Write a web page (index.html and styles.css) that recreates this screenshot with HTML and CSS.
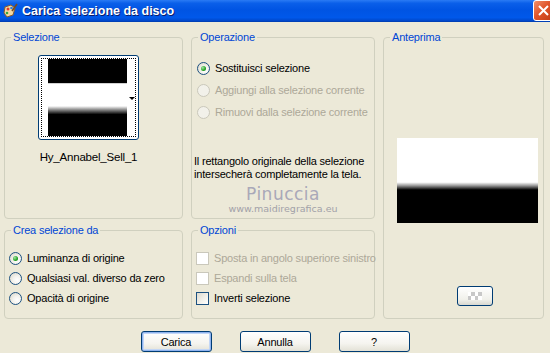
FILE: index.html
```html
<!DOCTYPE html>
<html lang="it">
<head>
    <meta charset="UTF-8">
    <title>Carica selezione da disco</title>
    <link rel="stylesheet" href="styles.css">
</head>
<body>
    <div class="window">
        <!-- Title bar -->
        <div class="titlebar">
            <svg class="app-icon" width="16" height="16" viewBox="0 0 16 16">
                <path d="M3 4 L9 2 L13 5 L11 12 L5 14 L2 10 Z" fill="#f3d9a4" stroke="#8a5a2b" stroke-width="1"/>
                <circle cx="6" cy="6" r="1.5" fill="#e53b2c"/>
                <circle cx="9.5" cy="5" r="1.3" fill="#2d7de0"/>
                <circle cx="5" cy="10" r="1.3" fill="#3aa53a"/>
                <path d="M10 8 L15 1" stroke="#7a4a1a" stroke-width="1.6"/>
            </svg>
            <span class="title">Carica selezione da disco</span>
            <div class="close-btn">
                <svg width="21" height="21" viewBox="0 0 21 21">
                    <path d="M6 6 L15 15 M15 6 L6 15" stroke="#fff" stroke-width="2"/>
                </svg>
            </div>
        </div>

        <div class="content">
            <div class="groups">
                <fieldset class="group sel-group">
                    <legend>Selezione</legend>
                    <div class="thumb-wrap">
                        <div class="thumb-btn">
                            <div class="thumb-focus">
                                <div class="thumb-img"></div>
                            </div>
                            <span class="thumb-arrow"></span>
                        </div>
                        <div class="thumb-name">Hy_Annabel_Sell_1</div>
                    </div>
                </fieldset>

                <fieldset class="group op-group">
                    <legend>Operazione</legend>
                    <div class="option-list op-list">
                        <label class="option"><span class="radio checked"></span>Sostituisci selezione</label>
                        <label class="option disabled"><span class="radio"></span>Aggiungi alla selezione corrente</label>
                        <label class="option disabled"><span class="radio"></span>Rimuovi dalla selezione corrente</label>
                    </div>
                    <p class="op-note">Il rettangolo originale della selezione intersecherà completamente la tela.</p>
                    <div class="watermark">
                        <div class="wm-name">Pinuccia</div>
                        <div class="wm-site">www.maidiregrafica.eu</div>
                    </div>
                </fieldset>

                <fieldset class="group preview-group">
                    <legend>Anteprima</legend>
                    <div class="preview-img"></div>
                    <div class="preview-btn">
                        <span class="dots"></span>
                    </div>
                </fieldset>

                <fieldset class="group crea-group">
                    <legend>Crea selezione da</legend>
                    <div class="option-list">
                        <label class="option"><span class="radio checked"></span>Luminanza di origine</label>
                        <label class="option"><span class="radio"></span>Qualsiasi val. diverso da zero</label>
                        <label class="option"><span class="radio"></span>Opacità di origine</label>
                    </div>
                </fieldset>

                <fieldset class="group opt-group">
                    <legend>Opzioni</legend>
                    <div class="option-list">
                        <label class="option disabled"><span class="check"></span>Sposta in angolo superiore sinistro</label>
                        <label class="option disabled"><span class="check"></span>Espandi sulla tela</label>
                        <label class="option"><span class="check"></span>Inverti selezione</label>
                    </div>
                </fieldset>
            </div>

            <div class="buttons">
                <button class="btn default">Carica</button>
                <button class="btn">Annulla</button>
                <button class="btn">?</button>
            </div>
        </div>
    </div>
</body>
</html>
```

FILE: styles.css
```css
* {
    margin: 0;
    padding: 0;
    box-sizing: border-box;
}

body {
    width: 550px;
    height: 353px;
    overflow: hidden;
    background: #ece9d8;
    font-family: 'Liberation Sans', Arial, sans-serif;
    font-size: 11px;
    letter-spacing: -0.2px;
    color: #000;
}

.window {
    width: 550px;
    height: 353px;
    display: flex;
    flex-direction: column;
}

/* Title bar */
.titlebar {
    position: relative;
    height: 22px;
    display: flex;
    align-items: center;
    gap: 4px;
    padding-left: 2px;
    background: linear-gradient(
        to bottom,
        #2a7bf4 0%,
        #0a5fe9 15%,
        #0054e3 45%,
        #0058ea 80%,
        #0046c8 95%,
        #003aa8 100%
    );
}

.app-icon {
    flex: none;
}

.title {
    color: #fff;
    font-weight: bold;
    font-size: 12.5px;
    letter-spacing: 0;
    text-shadow: 1px 1px 0 #0a1c6b;
}

.close-btn {
    position: absolute;
    left: 533px;
    top: 0;
    width: 21px;
    height: 21px;
    border: 1px solid #fff;
    border-radius: 3px;
    background: linear-gradient(135deg, #f0906a 0%, #e0552b 45%, #c23b14 100%);
}

.close-btn svg {
    position: absolute;
    left: -1px;
    top: -1px;
}

/* Content */
.content {
    flex: 1;
    display: flex;
    flex-direction: column;
    padding: 9px 0 0 4px;
}

.groups {
    display: grid;
    grid-template-columns: 179px 184px 161px;
    grid-template-rows: 188px 95px;
    column-gap: 8px;
    row-gap: 5px;
}

.group {
    border: 1px solid #d0d0bf;
    border-radius: 4px;
    padding: 0 6px;
    min-width: 0;
}

.group legend {
    color: #0046d5;
    padding: 0 2px;
    margin-left: 0;
    line-height: 13px;
}

.sel-group {
    grid-column: 1;
    grid-row: 1;
}

.op-group {
    grid-column: 2;
    grid-row: 1;
}

.preview-group {
    grid-column: 3;
    grid-row: 1 / 3;
}

.crea-group {
    grid-column: 1;
    grid-row: 2;
}

.opt-group {
    grid-column: 2;
    grid-row: 2;
}

/* Selezione thumbnail */
.thumb-wrap {
    display: flex;
    flex-direction: column;
    align-items: center;
    margin-top: 11px;
    margin-right: 10px;
}

.thumb-btn {
    position: relative;
    width: 101px;
    height: 85px;
    border: 1px solid #003c74;
    border-radius: 3px;
    background: #fff;
    padding: 2px;
}

.thumb-focus {
    width: 95px;
    height: 79px;
    border: 1px dotted #000;
    padding: 0 0 0 6px;
}

.thumb-img {
    width: 79px;
    height: 77px;
    background: linear-gradient(
        to bottom,
        #000 0,
        #000 31%,
        #fff 32%,
        #fff 61%,
        #888 66%,
        #000 72%,
        #000 100%
    );
}

.thumb-arrow {
    position: absolute;
    right: 3px;
    top: 41px;
    border-left: 3px solid transparent;
    border-right: 3px solid transparent;
    border-top: 3px solid #000;
}

.thumb-name {
    margin-top: 11px;
    font-size: 11.5px;
}

/* Options */
.option-list {
    display: flex;
    flex-direction: column;
    gap: 6px;
    margin-top: 14px;
    margin-left: -2px;
}

.op-list {
    margin-top: 17px;
    gap: 8px;
    margin-left: -1px;
}

.option {
    display: flex;
    align-items: center;
    gap: 5px;
    height: 14px;
    white-space: nowrap;
}

.option.disabled {
    color: #aca899;
}

.radio {
    flex: none;
    width: 13px;
    height: 13px;
    border: 1px solid #1c5180;
    border-radius: 50%;
    background: radial-gradient(circle at 65% 65%, #fff 0%, #f4f3ee 40%, #d6d2c2 100%);
    display: flex;
    align-items: center;
    justify-content: center;
}

.radio.checked::after {
    content: '';
    width: 5px;
    height: 5px;
    border-radius: 50%;
    background: radial-gradient(circle at 35% 35%, #a6e5a6 0%, #21a121 60%, #1a7a1a 100%);
}

.disabled .radio {
    border-color: #cac8bb;
    background: #f2f1ea;
}

.check {
    flex: none;
    width: 13px;
    height: 13px;
    border: 1px solid #1c5180;
    background: linear-gradient(135deg, #dcdad0 0%, #f3f2ec 60%, #fff 100%);
}

.disabled .check {
    border-color: #cac8bb;
    background: #fff;
}

.op-note {
    margin-top: 36px;
    line-height: 12.5px;
    width: 175px;
    margin-left: -4px;
}

.watermark {
    text-align: center;
    margin-top: 6px;
    letter-spacing: 0;
}

.wm-name {
    font-family: 'DejaVu Sans', sans-serif;
    font-size: 17px;
    color: #a9a8b8;
    line-height: 17px;
    letter-spacing: 0.5px;
}

.wm-site {
    font-family: 'DejaVu Sans', sans-serif;
    font-size: 9.5px;
    color: #a2a1a8;
    line-height: 11px;
    margin-top: 0;
}

/* Preview */
.preview-img {
    width: 141px;
    height: 85px;
    margin: 94px 0 0 7px;
    background: linear-gradient(
        to bottom,
        #fff 0,
        #fff 52%,
        #999 56%,
        #000 61%,
        #000 100%
    );
}

.preview-btn {
    width: 36px;
    height: 20px;
    margin: 63px 0 0 67px;
    border: 1px solid #003c74;
    border-radius: 3px;
    background: linear-gradient(to bottom, #fff 0%, #f0f0ea 70%, #d8d8d0 100%);
    display: flex;
    align-items: center;
    justify-content: center;
}

.dots {
    width: 14px;
    height: 8px;
    background:
        linear-gradient(90deg, #fff 50%, #c8c8c8 50%) 0 0 / 7px 4px,
        linear-gradient(90deg, #c8c8c8 50%, #fff 50%) 0 4px / 7px 4px;
    background-repeat: repeat-x;
}

/* Buttons */
.buttons {
    display: flex;
    justify-content: center;
    gap: 28px;
    margin-top: 12px;
    padding-right: 4px;
}

.btn {
    width: 71px;
    height: 21px;
    border: 1px solid #003c74;
    border-radius: 3px;
    background: linear-gradient(to bottom, #fff 0%, #f5f4ef 60%, #e3e1d6 100%);
    font-family: 'Liberation Sans', Arial, sans-serif;
    font-size: 11px;
    letter-spacing: -0.2px;
    color: #000;
}

.btn.default {
    box-shadow: inset 0 0 0 1px #8fb3ee, inset 0 0 0 2px #c2d6f6;
}
```
